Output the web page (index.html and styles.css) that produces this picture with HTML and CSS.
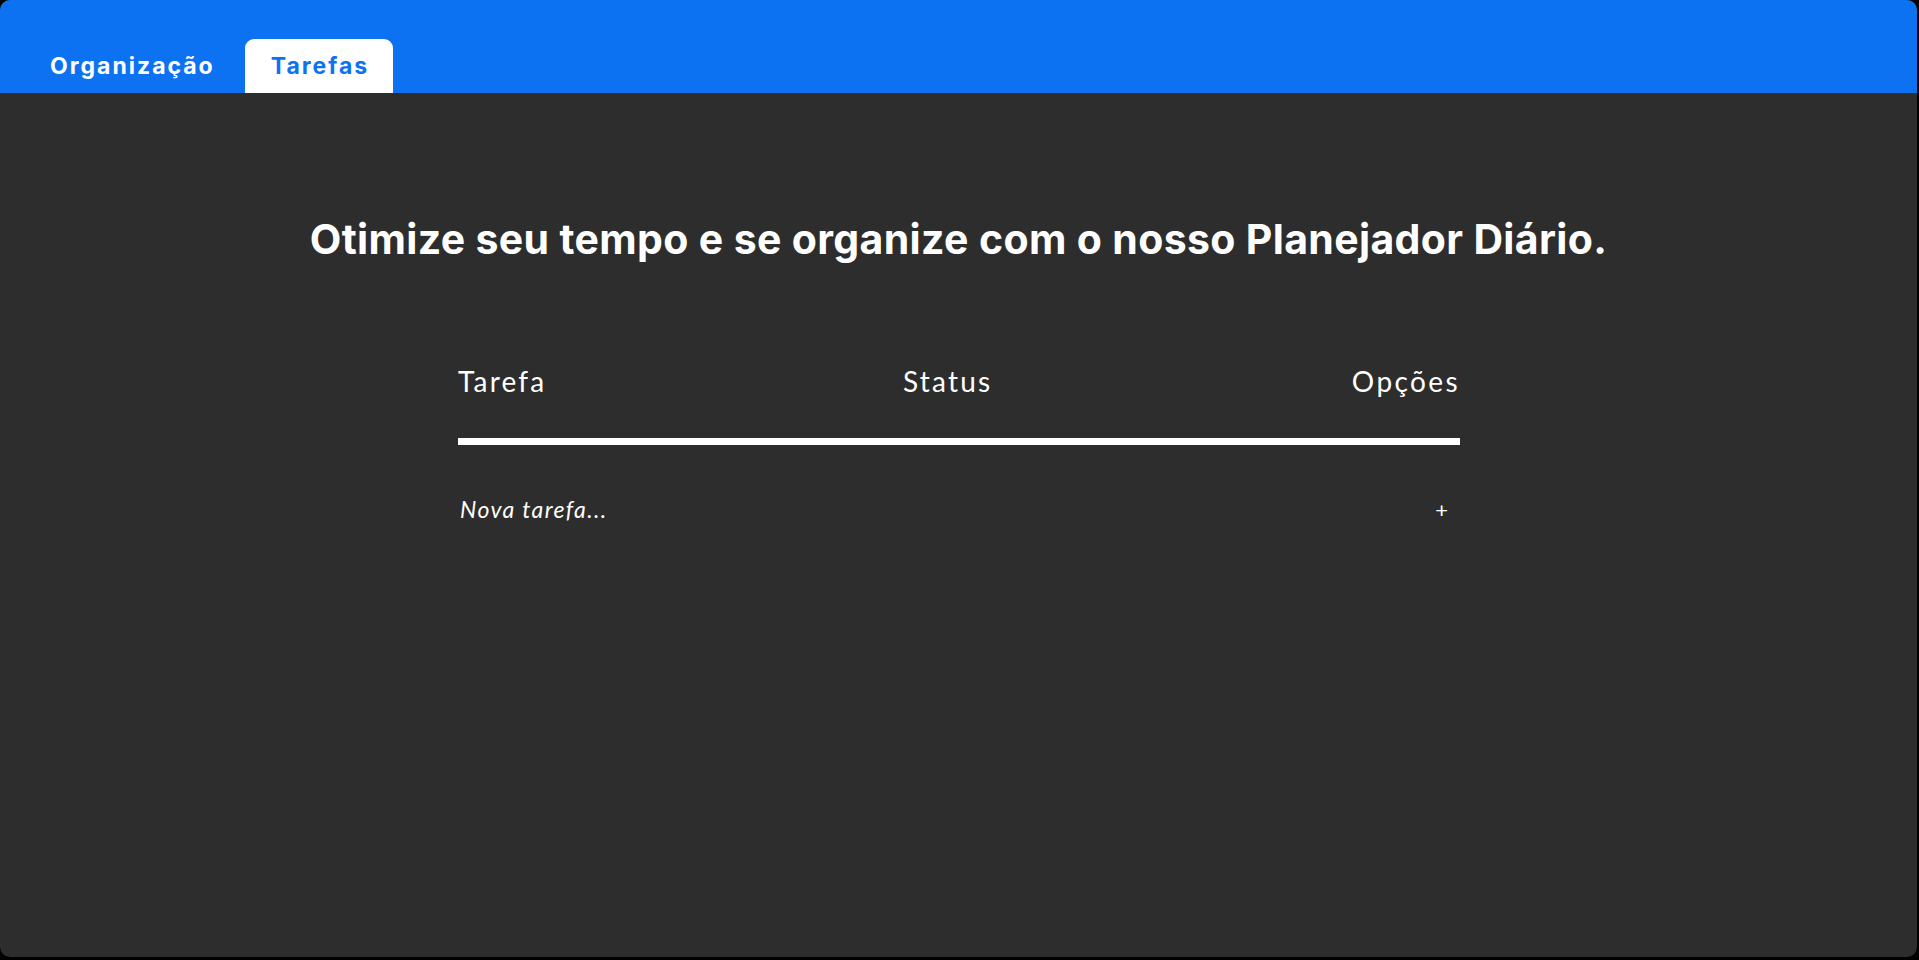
FILE: index.html
```html
<!DOCTYPE html>
<html lang="pt-BR">
<head>
<meta charset="utf-8">
<title>Planejador Diário</title>
<link rel="stylesheet" href="styles.css">
</head>
<body>
<div class="window">
  <header class="topbar">
    <nav class="tabs">
      <a class="tab">Organização</a>
      <a class="tab active">Tarefas</a>
    </nav>
  </header>
  <main class="content">
    <h1 class="title">Otimize seu tempo e se organize com o nosso Planejador Diário.</h1>
    <section class="tasks">
      <div class="tasks-head">
        <span class="col-task">Tarefa</span>
        <span class="col-status">Status</span>
        <span class="col-options">Opções</span>
      </div>
      <div class="divider"></div>
      <div class="task-new">
        <span class="placeholder">Nova tarefa...</span>
        <span class="add">+</span>
      </div>
    </section>
  </main>
</div>
</body>
</html>
```
FILE: styles.css
```css
html, body {
  margin: 0;
  padding: 0;
  background: #000;
  height: 100%;
}
body {
  font-family: "Open Sans", "Inter", sans-serif;
  overflow: hidden;
}
.window {
  width: 1917px;
  height: 957px;
  background: #2d2d2d;
  border-radius: 10px;
  overflow: hidden;
  display: flex;
  flex-direction: column;
}
.topbar {
  height: 93px;
  background: #0d72f2;
  display: flex;
  align-items: flex-end;
  padding-left: 23px;
  flex-shrink: 0;
}
.tabs {
  display: flex;
  gap: 4px;
}
.tab {
  height: 54px;
  padding: 0 26px 0 27px;
  display: flex;
  align-items: center;
  font-family: "Inter", sans-serif;
  font-weight: 700;
  font-size: 23px;
  letter-spacing: 2px;
  color: #fff;
  border-radius: 9px 9px 0 0;
  cursor: pointer;
}
.tab.active {
  background: #fff;
  color: #0d72f2;
  padding: 0 24px 0 26px;
}
.content {
  display: flex;
  flex-direction: column;
  align-items: center;
}
.title {
  margin: 116px 0 0;
  font-family: "Inter", sans-serif;
  font-weight: 700;
  font-size: 41px;
  letter-spacing: 0.35px;
  line-height: 60px;
  color: #fff;
  text-align: center;
}
.tasks {
  width: 1002px;
  margin-top: 95px;
  margin-left: 1px;
  font-family: "Lato", sans-serif;
  color: #fff;
}
.tasks-head {
  display: grid;
  grid-template-columns: 445px 1fr auto;
  font-size: 28px;
  letter-spacing: 2.2px;
  line-height: 34px;
}
.col-options {
  letter-spacing: 2.4px;
  margin-right: 0;
}
.divider {
  height: 7px;
  background: #fff;
  margin-top: 40px;
}
.task-new {
  display: flex;
  justify-content: space-between;
  align-items: center;
  margin-top: 50px;
  padding: 0 12px 0 2px;
}
.placeholder {
  font-style: italic;
  font-size: 23px;
  letter-spacing: 1.4px;
}
.add {
  font-size: 22px;
}
```
